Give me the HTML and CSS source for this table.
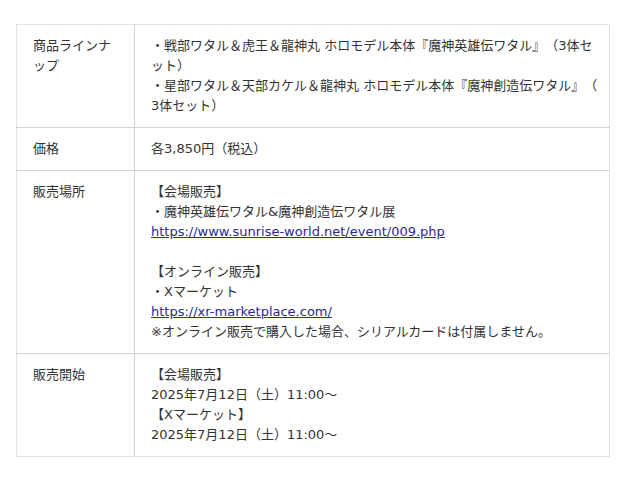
FILE: index.html
```html
<!DOCTYPE html>
<html lang="ja">
<head>
<meta charset="utf-8">
<link rel="stylesheet" href="styles.css">
</head>
<body>
<table class="info">
  <tr>
    <th>商品ラインナップ</th>
    <td>・戦部ワタル＆虎王＆龍神丸 ホロモデル本体『魔神英雄伝ワタル』（3体セット）<br>・星部ワタル＆天部カケル＆龍神丸 ホロモデル本体『魔神創造伝ワタル』（3体セット）</td>
  </tr>
  <tr>
    <th>価格</th>
    <td>各3,850円（税込）</td>
  </tr>
  <tr>
    <th>販売場所</th>
    <td>【会場販売】<br>・魔神英雄伝ワタル&amp;魔神創造伝ワタル展<br><a href="#">https://www.sunrise-world.net/event/009.php</a><br><br>【オンライン販売】<br>・Xマーケット<br><a href="#">https://xr-marketplace.com/</a><br>※オンライン販売で購入した場合、シリアルカードは付属しません。</td>
  </tr>
  <tr>
    <th>販売開始</th>
    <td>【会場販売】<br>2025年7月12日（土）11:00～<br>【Xマーケット】<br>2025年7月12日（土）11:00～</td>
  </tr>
</table>
</body>
</html>
```
FILE: styles.css
```css
html, body {
  margin: 0;
  padding: 0;
  background: #fff;
}
body {
  padding: 24px 30px 0 16px;
  font-family: "DejaVu Sans", "Noto Sans CJK JP", sans-serif;
  font-size: 13px;
  line-height: 20px;
  color: #333;
  text-spacing-trim: space-all;
}
.info {
  width: 594px;
  border-collapse: collapse;
  border: 1px solid #e3e3e3;
}
.info th, .info td {
  text-align: left;
  vertical-align: top;
  font-weight: normal;
  padding: 11px 16px 11px 16px;
  border: 1px solid #d2d2d2;
}
.info td {
  line-break: anywhere;
  padding-right: 8px;
}
.info th {
  width: 85px;
}
.info tr:first-child th, .info tr:first-child td { border-top-color: #e3e3e3; }
.info tr:last-child th, .info tr:last-child td { border-bottom-color: #e3e3e3; }
.info th { border-left-color: #e3e3e3; }
.info td { border-right-color: #e3e3e3; }
.info a {
  color: #2a2a8f;
  text-decoration: underline;
}
```
